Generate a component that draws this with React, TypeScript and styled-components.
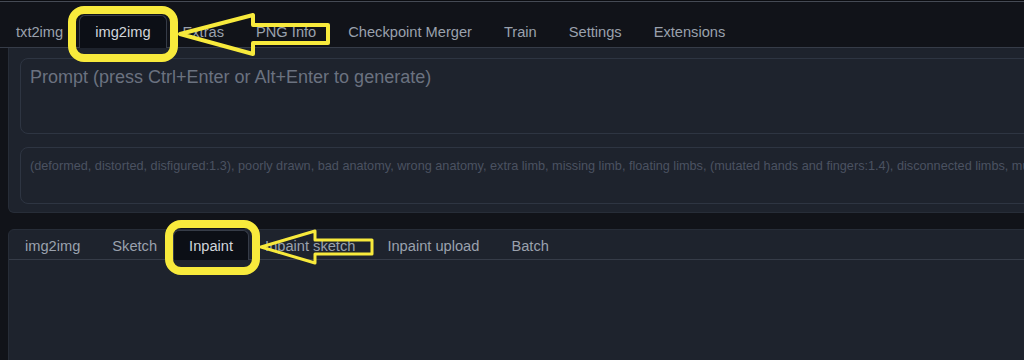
import React from "react";
import styled, { createGlobalStyle } from "styled-components";

const GlobalStyle = createGlobalStyle`
  html, body { margin: 0; padding: 0; background: #111319; }
  body { font-family: "Liberation Sans", Arial, sans-serif; overflow: hidden; }
`;

const Page = styled.div`
  position: relative;
  width: 1024px;
  height: 360px;
  overflow: hidden;
  background: #111319;
  border-top: 1px solid #0b0c10;
  box-sizing: border-box;
`;

const TopRule = styled.div`
  height: 1px;
  background: #454a54;
`;

const TabBar = styled.div<{ $height: number }>`
  display: flex;
  align-items: flex-end;
  height: ${(p) => p.$height}px;
  border-bottom: 1px solid #363c48;
  box-sizing: border-box;
`;

const Tab = styled.div<{ $selected?: boolean; $h: number }>`
  height: ${(p) => p.$h}px;
  display: flex;
  align-items: center;
  padding: 0 15px;
  margin-bottom: -1px;
  font-size: 14.65px;
  color: ${(p) => (p.$selected ? "#d1d5db" : "#9aa1ad")};
  background: ${(p) => (p.$selected ? "#0c0f16" : "transparent")};
  border: 1px solid ${(p) => (p.$selected ? "#363c48" : "transparent")};
  border-bottom: none;
  border-radius: 6px 6px 0 0;
  white-space: nowrap;
`;

const Panel = styled.div`
  margin-left: 8px;
  margin-right: -40px;
  background: #1e232d;
  border: 1px solid #272d38;
  border-top: none;
  border-radius: 0 0 6px 6px;
  padding: 10px 11px 8px 11px;
  display: flex;
  flex-direction: column;
  gap: 13px;
`;

const PromptBox = styled.div<{ $h: number; $size: number; $color: string; $pt: number }>`
  height: ${(p) => p.$h}px;
  box-sizing: border-box;
  border: 1px solid #2e3542;
  border-radius: 8px;
  padding: ${(p) => p.$pt}px 10px 0 9px;
  font-size: ${(p) => p.$size}px;
  line-height: 1.2;
  color: ${(p) => p.$color};
  white-space: nowrap;
  overflow: hidden;
`;

const Lower = styled.div`
  margin: 16px -8px 0 8px;
  background: #1e232d;
  border: 1px solid #272d38;
  border-radius: 6px 6px 0 0;
  height: 200px;
`;

const Overlay = styled.svg`
  position: absolute;
  left: 0;
  top: 0;
  pointer-events: none;
`;

const topTabs = ["txt2img", "img2img", "Extras", "PNG Info", "Checkpoint Merger", "Train", "Settings", "Extensions"];
const subTabs = ["img2img", "Sketch", "Inpaint", "Inpaint sketch", "Inpaint upload", "Batch"];

export default function App() {
  return (
    <>
      <GlobalStyle />
      <Page>
        <TopRule />
        <TabBar $height={46}>
          {topTabs.map((t) => (
            <Tab key={t} $h={32} $selected={t === "img2img"}>
              {t}
            </Tab>
          ))}
        </TabBar>
        <Panel>
          <PromptBox $h={76} $size={18} $color="#6b7280" $pt={8}>
            Prompt (press Ctrl+Enter or Alt+Enter to generate)
          </PromptBox>
          <PromptBox $h={57} $size={12.7} $color="#4b5261" $pt={11}>
            (deformed, distorted, disfigured:1.3), poorly drawn, bad anatomy, wrong anatomy, extra limb, missing limb, floating limbs, (mutated hands and fingers:1.4), disconnected limbs, mutation
          </PromptBox>
        </Panel>
        <Lower>
          <TabBar $height={30}>
            {subTabs.map((t) => (
              <Tab key={t} $h={29} $selected={t === "Inpaint"}>
                {t}
              </Tab>
            ))}
          </TabBar>
        </Lower>
        <Overlay width={1024} height={360} viewBox="0 0 1024 360">
          <g fill="none" stroke="#f8ea3c" strokeLinejoin="round">
            <rect x={72} y={9} width={102} height={48} rx={12} strokeWidth={8} />
            <path d="M180 33 L253 14 L253 24 L328 24 L328 42 L253 42 L253 53 Z" strokeWidth={4} />
            <rect x={169} y={223} width={87} height={47} rx={12} strokeWidth={8} />
            <path d="M261 246 L315 230 L315 239 L372 239 L372 253 L315 253 L315 262 Z" strokeWidth={3} />
          </g>
        </Overlay>
      </Page>
    </>
  );
}
